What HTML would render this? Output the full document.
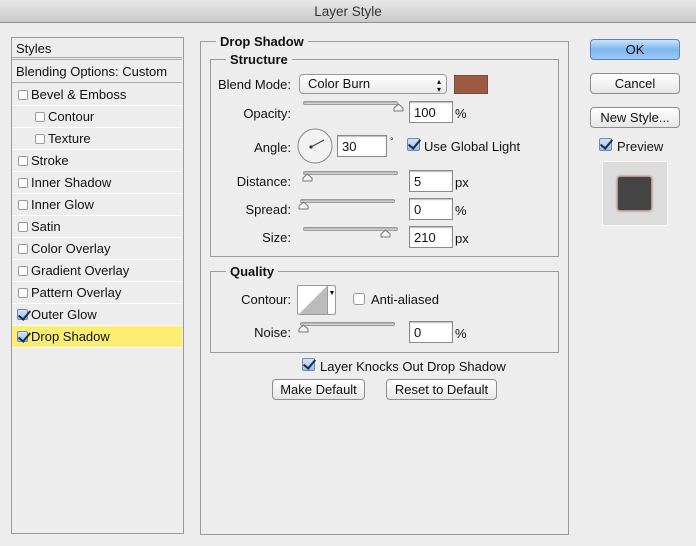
<!DOCTYPE html>
<html><head><meta charset="utf-8"><style>
*{box-sizing:border-box;margin:0;padding:0}
body{width:696px;height:546px;background:#ededed;font-family:"Liberation Sans",sans-serif;font-size:13px;color:#111;position:relative;overflow:hidden}
.a{position:absolute;white-space:nowrap}
.title{left:0;top:0;width:696px;height:23px;background:linear-gradient(#e8e8e8,#c9c9c9);border-bottom:1px solid #8e8e8e;text-align:center;line-height:23px;color:#333;font-size:13.5px}
.box{position:absolute;border:1px solid #9a9a9a}
.row{position:absolute;left:12px;width:170px;height:22px;line-height:21px;border-bottom:1px solid #fff}
.cb{display:inline-block;width:10px;height:10px;border:1px solid #9a9a9a;border-radius:2px;background:#fff;vertical-align:-1px;margin-right:3px}
.cbc{position:absolute;width:13px;height:13px;border:1px solid #6a8ab8;border-radius:2px;background:linear-gradient(#d5e3f5,#9fbde2)}
.cbc:after{content:"";position:absolute;left:3px;top:-2px;width:5px;height:10px;border:solid #1a2a4a;border-width:0 2.5px 2.5px 0;transform:rotate(40deg)}
.lbl{position:absolute;text-align:right;width:100px}
.leg{position:absolute;background:#ededed;font-weight:bold;padding:0 4px;font-size:13px}
.inp{position:absolute;background:#fff;border:1px solid #8a8a8a;height:22px;width:44px;line-height:21px;padding-left:4px;box-shadow:inset 0 1px 1px #bbb}
.trk{position:absolute;height:4px;width:95px;border:1px solid #999;border-radius:2px;background:linear-gradient(#aaa,#ddd)}
.th{position:absolute;width:11px;height:9px}
.btn{position:absolute;height:21px;border:1px solid #8e8e8e;border-radius:4px;background:linear-gradient(#fff,#e6e6e6);text-align:center;line-height:19px;font-size:13px}
</style></head><body>
<div class="a title">Layer Style</div>

<div class="box" style="left:11px;top:37px;width:173px;height:497px"></div>
<div class="row" style="top:38px;height:22px;border-bottom:3px double #aaa;padding-left:4px">Styles</div>
<div class="row" style="top:61px;padding-left:4px;border-bottom:1px solid #aaa">Blending Options: Custom</div>
<div class="row" style="top:84px;padding-left:6px"><span class="cb"></span>Bevel &amp; Emboss</div>
<div class="row" style="top:106px;padding-left:23px"><span class="cb"></span>Contour</div>
<div class="row" style="top:128px;padding-left:23px"><span class="cb"></span>Texture</div>
<div class="row" style="top:150px;padding-left:6px"><span class="cb"></span>Stroke</div>
<div class="row" style="top:172px;padding-left:6px"><span class="cb"></span>Inner Shadow</div>
<div class="row" style="top:194px;padding-left:6px"><span class="cb"></span>Inner Glow</div>
<div class="row" style="top:216px;padding-left:6px"><span class="cb"></span>Satin</div>
<div class="row" style="top:238px;padding-left:6px"><span class="cb"></span>Color Overlay</div>
<div class="row" style="top:260px;padding-left:6px"><span class="cb"></span>Gradient Overlay</div>
<div class="row" style="top:282px;padding-left:6px"><span class="cb"></span>Pattern Overlay</div>
<div class="row" style="top:304px;padding-left:19px">Outer Glow</div>
<div class="cbc" style="left:17px;top:309px;width:11px;height:11px"></div>
<div class="row" style="top:326px;padding-left:19px;background:#fbee73">Drop Shadow</div>
<div class="cbc" style="left:17px;top:331px;width:11px;height:11px"></div>

<div class="box" style="left:200px;top:41px;width:369px;height:494px;border-bottom-color:#999"></div>
<div class="leg" style="left:216px;top:34px">Drop Shadow</div>
<div class="box" style="left:210px;top:59px;width:349px;height:198px"></div>
<div class="leg" style="left:226px;top:52px">Structure</div>

<div class="lbl" style="left:191px;top:77px">Blend Mode:</div>
<div class="a" style="left:299px;top:74px;width:148px;height:20px;border:1px solid #999;border-radius:4px;background:linear-gradient(#fff,#e9e9e9);line-height:18px;padding-left:8px">Color Burn<span style="position:absolute;right:5px;font-size:8px;line-height:8px;top:3px">▴<br>▾</span></div>
<div class="a" style="left:454px;top:75px;width:34px;height:19px;background:#9c5a43;border:1px solid #7a4a3a"></div>

<div class="lbl" style="left:191px;top:106px">Opacity:</div>
<div class="trk" style="left:303px;top:101px"></div>
<svg class="th" style="left:393px;top:103px" viewBox="0 0 11 9"><path d="M1 8V5L5.5 1L10 5V8Z" fill="#f4f4f4" stroke="#777"/></svg>
<div class="inp" style="left:409px;top:101px">100</div><div class="a" style="left:455px;top:106px">%</div>

<div class="lbl" style="left:191px;top:140px">Angle:</div>
<svg class="a" style="left:297px;top:128px" width="36" height="36"><circle cx="18" cy="18" r="17" fill="#f2f2f2" stroke="#888"/><line x1="14" y1="19" x2="27" y2="12" stroke="#444" stroke-width="1.2"/><circle cx="14" cy="19" r="1.6" fill="#333"/></svg>
<div class="inp" style="left:337px;top:135px;width:50px">30</div><div class="a" style="left:390px;top:136px;font-size:9px">°</div>
<div class="cbc" style="left:407px;top:138px"></div><div class="a" style="left:424px;top:139px">Use Global Light</div>

<div class="lbl" style="left:191px;top:174px">Distance:</div>
<div class="trk" style="left:303px;top:171px"></div>
<svg class="th" style="left:302px;top:173px" viewBox="0 0 11 9"><path d="M1 8V5L5.5 1L10 5V8Z" fill="#f4f4f4" stroke="#777"/></svg>
<div class="inp" style="left:409px;top:170px">5</div><div class="a" style="left:455px;top:175px">px</div>

<div class="lbl" style="left:191px;top:202px">Spread:</div>
<div class="trk" style="left:300px;top:199px"></div>
<svg class="th" style="left:298px;top:201px" viewBox="0 0 11 9"><path d="M1 8V5L5.5 1L10 5V8Z" fill="#f4f4f4" stroke="#777"/></svg>
<div class="inp" style="left:409px;top:198px">0</div><div class="a" style="left:455px;top:203px">%</div>

<div class="lbl" style="left:191px;top:230px">Size:</div>
<div class="trk" style="left:303px;top:227px"></div>
<svg class="th" style="left:380px;top:229px" viewBox="0 0 11 9"><path d="M1 8V5L5.5 1L10 5V8Z" fill="#f4f4f4" stroke="#777"/></svg>
<div class="inp" style="left:409px;top:226px">210</div><div class="a" style="left:455px;top:231px">px</div>

<div class="box" style="left:210px;top:271px;width:349px;height:82px"></div>
<div class="leg" style="left:226px;top:264px">Quality</div>
<div class="lbl" style="left:191px;top:292px">Contour:</div>
<div class="a" style="left:297px;top:285px;width:39px;height:30px;border:1px solid #999;border-radius:2px;background:#fff"><svg width="29" height="28" style="position:absolute;left:1px;top:0"><path d="M0 28L28 0V28Z" fill="#bbb"/></svg><div style="position:absolute;left:29px;top:0;width:9px;height:28px;border-left:1px solid #999;text-align:center;font-size:7px;line-height:16px">▼</div></div>
<div class="a" style="left:353px;top:293px;width:12px;height:12px;border:1px solid #999;border-radius:3px;background:#fff"></div>
<div class="a" style="left:371px;top:292px">Anti-aliased</div>
<div class="lbl" style="left:191px;top:325px">Noise:</div>
<div class="trk" style="left:300px;top:322px"></div>
<svg class="th" style="left:298px;top:324px" viewBox="0 0 11 9"><path d="M1 8V5L5.5 1L10 5V8Z" fill="#f4f4f4" stroke="#777"/></svg>
<div class="inp" style="left:409px;top:321px">0</div><div class="a" style="left:455px;top:326px">%</div>

<div class="cbc" style="left:302px;top:358px"></div><div class="a" style="left:320px;top:359px">Layer Knocks Out Drop Shadow</div>
<div class="btn" style="left:272px;top:379px;width:93px">Make Default</div>
<div class="btn" style="left:386px;top:379px;width:111px">Reset to Default</div>

<div class="btn" style="left:590px;top:39px;width:90px;background:linear-gradient(#c9e2fb,#7fb6ef 50%,#9cc9f5);border-color:#5a82b8">OK</div>
<div class="btn" style="left:590px;top:73px;width:90px">Cancel</div>
<div class="btn" style="left:590px;top:107px;width:90px">New Style...</div>
<div class="cbc" style="left:599px;top:138px"></div><div class="a" style="left:617px;top:139px;font-size:13px">Preview</div>
<div class="a" style="left:602px;top:161px;width:66px;height:65px;background:#dcdcdc;border:1px solid #fafafa"></div>
<div class="a" style="left:618px;top:177px;width:33px;height:33px;background:#444;border-radius:2px;box-shadow:0 0 2px 1px #a87060"></div>
</body></html>
